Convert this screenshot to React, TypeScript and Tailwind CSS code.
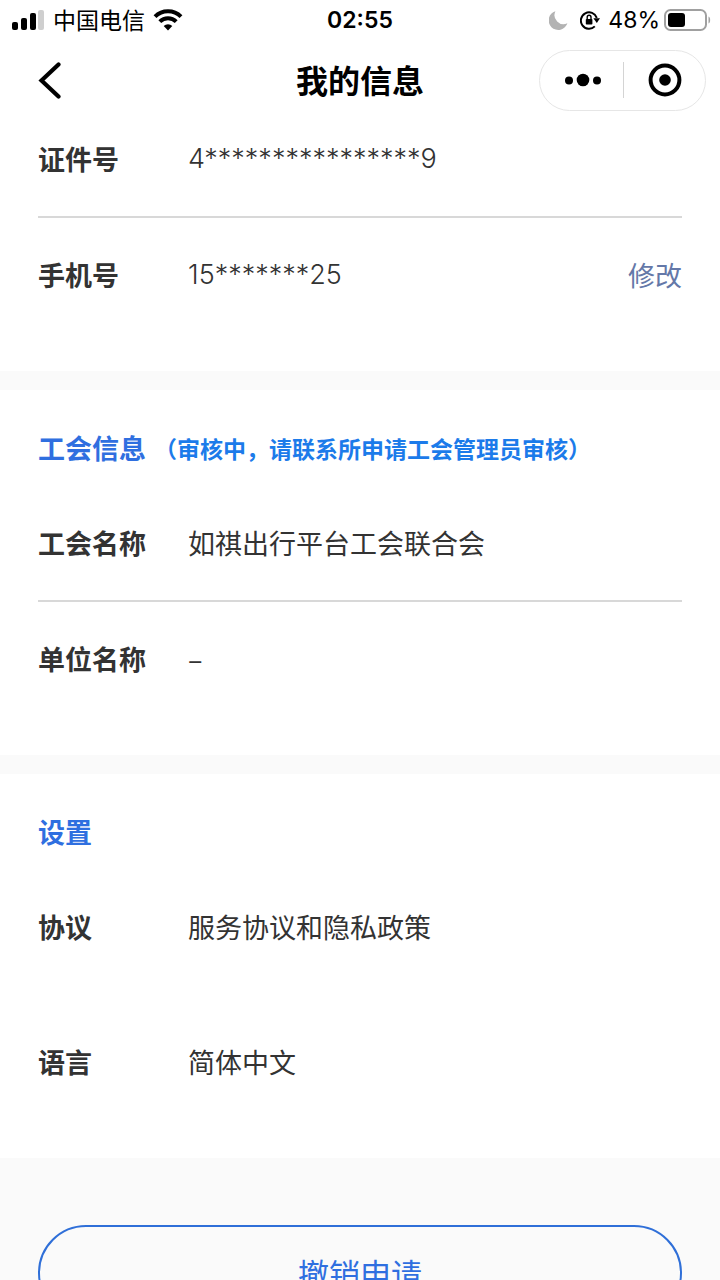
import type { ReactNode } from 'react'

type RowProps = {
  label: string
  children: ReactNode
  action?: ReactNode
  divider?: boolean
  numeric?: boolean
}

function Row({ label, children, action, divider = false, numeric = false }: RowProps) {
  return (
    <div
      className={`flex items-center border-b-2 py-[38px] text-[27px] leading-[38px] ${
        divider ? 'border-[#d8d8d8]' : 'border-transparent'
      }`}
    >
      <dt className="w-[150px] shrink-0 font-bold">{label}</dt>
      <dd className={numeric ? 'flex-1 font-[Inter] font-light' : 'flex-1'}>{children}</dd>
      {action && <dd className="shrink-0">{action}</dd>}
    </div>
  )
}

function StatusBar() {
  return (
    <div className="grid h-10 grid-cols-[1fr_auto_1fr] items-center px-3 text-[23px] leading-10 text-black">
      <div className="flex items-center gap-2">
        {/* Signal */}
        <svg width="33" height="20" viewBox="0 0 33 20" aria-hidden="true">
          <rect x="0" y="12" width="6" height="8" rx="2" />
          <rect x="9" y="8" width="6" height="12" rx="2" />
          <rect x="18" y="3" width="6" height="17" rx="2" />
          <rect x="26" y="0" width="6" height="20" rx="2" fill="#cfcfcf" />
        </svg>
        <span className="pb-0.5 leading-9">中国电信</span>
        {/* Wifi */}
        <svg width="30" height="22" viewBox="0 0 30 22" fill="none" stroke="#000" strokeWidth="4" aria-hidden="true">
          <path d="M2 7.7a18.4 18.4 0 0 1 26 0" />
          <path d="M6.8 12.6a11.6 11.6 0 0 1 16.4 0" />
          <path d="M15 21.5l-4.3-4.4a6 6 0 0 1 8.6 0z" fill="#000" stroke="none" />
        </svg>
      </div>

      <time className="font-[Inter] font-semibold">02:55</time>

      <div className="flex items-center justify-end">
        {/* Moon */}
        <svg width="19" height="20" viewBox="0 0 19 20" aria-hidden="true">
          <path d="M6.4 1.2a9 9 0 0 0 12 12A9.6 9.6 0 1 1 6.4 1.2z" fill="#b3b3b3" />
        </svg>
        {/* Rotation lock */}
        <svg className="ml-3" width="20" height="20" viewBox="0 0 20 20" fill="none" aria-hidden="true">
          <path d="M14.8 16.4a8.2 8.2 0 1 1 2-8.6" stroke="#000" strokeWidth="2" />
          <path d="M13.4 8.2H20l-3.2 4.8z" fill="#000" />
          <rect x="5.8" y="9" width="6.6" height="5.6" rx="0.8" fill="#000" />
          <path d="M7.2 9V7.2a1.9 1.9 0 0 1 3.8 0V9" stroke="#000" strokeWidth="1.4" />
        </svg>
        <span className="ml-2 font-[Inter]">48%</span>
        {/* Battery */}
        <svg className="ml-1 -mr-1" width="48" height="22" viewBox="0 0 48 22" fill="none" aria-hidden="true">
          <rect x="1" y="1" width="41" height="20" rx="5.5" stroke="#a0a0a0" strokeWidth="2" />
          <rect x="4" y="4" width="17" height="14" rx="3" fill="#000" />
          <path d="M44.5 7.5c2.2.6 2.2 6.4 0 7z" fill="#a0a0a0" />
        </svg>
      </div>
    </div>
  )
}

function NavBar() {
  return (
    <header className="grid h-20 grid-cols-[1fr_auto_1fr] items-center px-[14px] text-black">
      <button type="button" aria-label="返回" className="ml-6 justify-self-start">
        <svg width="24" height="38" viewBox="0 0 24 38" fill="none" stroke="#000" strokeWidth="4.2" strokeLinecap="round">
          <path d="M20.5 3.5L3.5 19.5L20.5 35.5" />
        </svg>
      </button>
      <h1 className="pb-0.5 text-[32px] leading-10 font-bold">我的信息</h1>
      <div className="flex h-[61px] w-[167px] items-center justify-self-end rounded-full border border-[#e6e6e6]">
        <button type="button" aria-label="更多" className="flex h-9 w-[83px] items-center justify-center pl-0.5">
          <svg width="36" height="14" viewBox="0 0 36 14">
            <circle cx="4" cy="7.5" r="4" />
            <circle cx="18" cy="7" r="6.3" />
            <circle cx="32" cy="7.5" r="4" />
          </svg>
        </button>
        <span className="h-9 w-px bg-[#d4d4d4]" />
        <button type="button" aria-label="关闭" className="flex h-9 flex-1 items-center justify-center">
          <svg width="34" height="34" viewBox="0 0 34 34">
            <circle cx="17" cy="17" r="14.4" fill="none" stroke="#000" strokeWidth="4" />
            <circle cx="17" cy="17" r="5.8" />
          </svg>
        </button>
      </div>
    </header>
  )
}

function Section({ title, hint, children }: { title: string; hint?: string; children: ReactNode }) {
  return (
    <section className="bg-white px-[38px] pt-[38px] pb-[37px]">
      <div className="mb-[18px] flex items-center gap-2 leading-10">
        <h2 className="text-[27px] font-bold text-[#2f6fe0]">{title}</h2>
        {hint && <p className="text-[23px] font-bold text-[#1c7bea]">{hint}</p>}
      </div>
      {children}
    </section>
  )
}

export default function App() {
  return (
    <div
      lang="zh-CN"
      className="flex min-h-screen flex-col bg-[#fafafa] font-['Noto_Sans_CJK_SC',sans-serif] text-[#333]"
    >
      <div className="sticky top-0 z-10 bg-white">
        <StatusBar />
        <NavBar />
      </div>

      <main className="flex flex-col gap-[19px]">
        {/* First row sits partly under the nav bar */}
        <dl className="-mt-[18px] bg-white px-[38px] pb-[37px]">
          <Row label="证件号" numeric divider>
            4****************9
          </Row>
          <Row
            label="手机号"
            numeric
            action={
              <button type="button" className="block text-[#6478a8]">
                修改
              </button>
            }
          >
            15*******25
          </Row>
        </dl>

        <Section title="工会信息" hint="（审核中，请联系所申请工会管理员审核）">
          <dl>
            <Row label="工会名称" divider>
              如祺出行平台工会联合会
            </Row>
            <Row label="单位名称">–</Row>
          </dl>
        </Section>

        <Section title="设置">
          <dl className="flex flex-col gap-[19px]">
            <Row label="协议">
              <a href="#agreement">服务协议和隐私政策</a>
            </Row>
            <Row label="语言">简体中文</Row>
          </dl>
        </Section>
      </main>

      <footer className="px-[38px] pt-[67px] pb-10">
        <button
          type="button"
          className="h-24 w-full rounded-full border-2 border-[#2f6fd8] text-[31px] text-[#2f6fe0]"
        >
          撤销申请
        </button>
      </footer>
    </div>
  )
}
